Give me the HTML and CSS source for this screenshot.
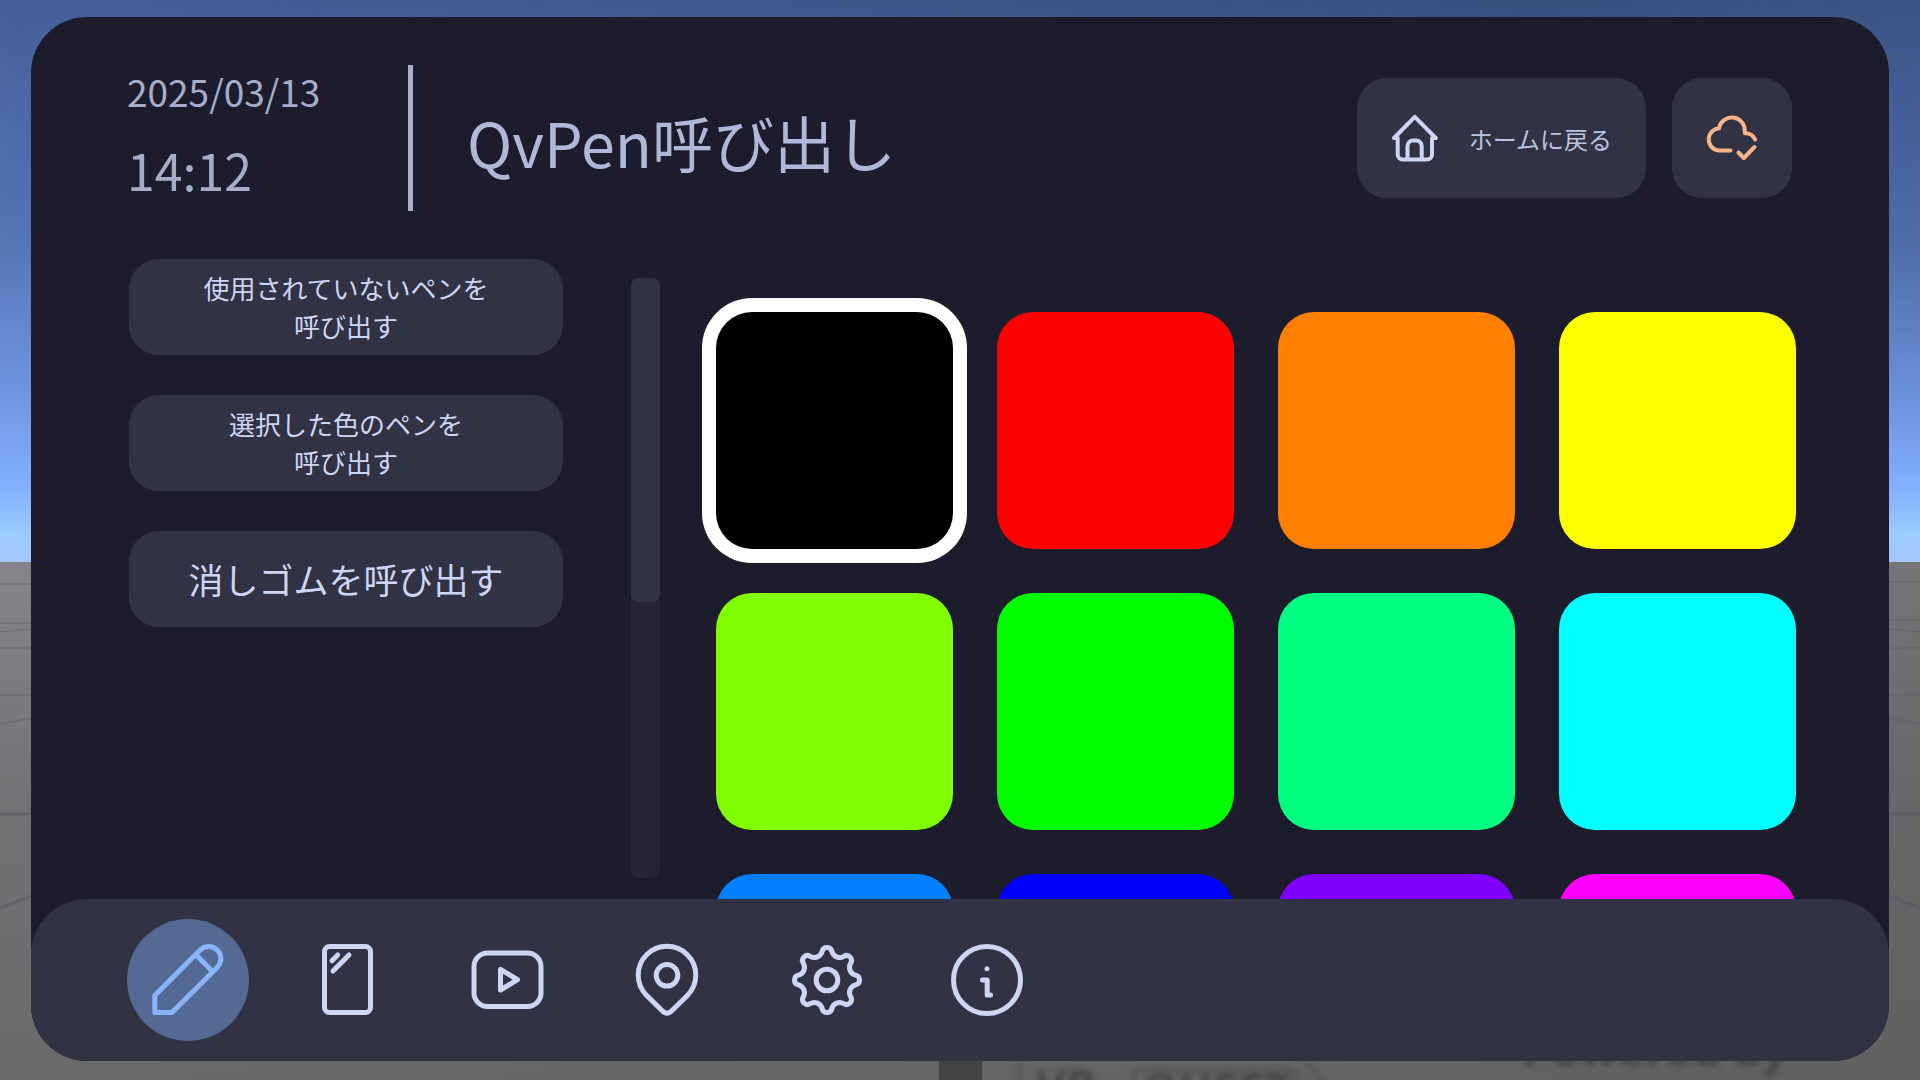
FILE: index.html
```html
<!DOCTYPE html>
<html lang="ja">
<head>
<meta charset="utf-8">
<meta name="viewport" content="width=device-width, initial-scale=1">
<title>QvPen呼び出し</title>
<link rel="stylesheet" href="styles.css">
</head>
<body>
<div class="scene">
  <svg class="backdrop" viewBox="0 0 1920 1080" preserveAspectRatio="none" aria-hidden="true">
    <defs>
      <linearGradient id="sky" x1="0" y1="0" x2="0" y2="1">
        <stop offset="0" stop-color="#45609b"/>
        <stop offset=".43" stop-color="#5675b7"/>
        <stop offset=".7" stop-color="#6f95e0"/>
        <stop offset=".86" stop-color="#82aeff"/>
        <stop offset=".95" stop-color="#9acbff"/>
        <stop offset="1" stop-color="#a6c6fb"/>
      </linearGradient>
      <linearGradient id="ground" x1="0" y1="0" x2="0" y2="1">
        <stop offset="0" stop-color="#858589"/>
        <stop offset=".5" stop-color="#727275"/>
        <stop offset="1" stop-color="#6a6a6b"/>
      </linearGradient>
      <linearGradient id="shade" x1="0" y1="0" x2="1" y2="0">
        <stop offset="0" stop-color="#1f2a3c" stop-opacity="0"/>
        <stop offset=".8" stop-color="#1f2a3c" stop-opacity=".3"/>
        <stop offset="1" stop-color="#1f2a3c" stop-opacity=".22"/>
      </linearGradient>
      <linearGradient id="dim" x1="0" y1="0" x2="1" y2="0">
        <stop offset="0" stop-color="#444" stop-opacity="0"/>
        <stop offset="1" stop-color="#444" stop-opacity=".25"/>
      </linearGradient>
      <linearGradient id="fade" x1="0" y1="0" x2="0" y2="1">
        <stop offset="0" stop-color="#fff"/>
        <stop offset="1" stop-color="#000"/>
      </linearGradient>
      <mask id="top"><rect width="1920" height="480" fill="url(#fade)"/></mask>
      <filter id="soft"><feGaussianBlur stdDeviation="3"/></filter>
    </defs>
    <rect width="1920" height="563" fill="url(#sky)"/>
    <rect width="1920" height="480" fill="url(#shade)" mask="url(#top)"/>
    <rect y="562" width="1920" height="518" fill="url(#ground)"/>
    <rect y="562" width="1920" height="518" fill="url(#dim)"/>
    <g stroke="#55565a" stroke-opacity=".45" fill="none">
      <path d="M0 584H31M0 623H31M0 632L31 629M0 648H31M0 695H31M0 724L31 718"/>
      <path d="M1889 582H1920M1889 620H1920M1889 629L1920 632M1889 648H1920M1889 695H1920M1889 718L1920 724"/>
      <path stroke-width="3" d="M0 814H31M0 908L31 896M1889 814H1920M1889 896L1920 908"/>
    </g>
    <rect x="939" y="1040" width="43" height="40" fill="#444446"/>
    <g filter="url(#soft)" class="sign">
      <path d="M1020 1060V1084M1308 1060L1322 1084M1134 1088V1071H1296V1088" fill="none" stroke="#505052" stroke-width="3"/>
      <text x="1036" y="1103">VR</text>
      <text x="1142" y="1107">QUEST</text>
      <text x="1522" y="1066">Powered by</text>
    </g>
  </svg>

  <main class="panel">
    <header class="header">
      <div class="clock">
        <time class="date">2025/03/13</time>
        <time class="time">14:12</time>
      </div>
      <h1 class="title">QvPen呼び出し</h1>
      <button class="tile home" type="button">
        <svg width="48" height="48" viewBox="0 0 48 48" aria-hidden="true">
          <path d="M6.700 24H3L23.800 2.800 44.800 24H41V40.500a5 5 0 0 1-5 5H11.700a5 5 0 0 1-5-5Z"/>
          <path d="M16.500 45V32a5.500 5.500 0 0 1 5.500-5.500h3.200a5.500 5.500 0 0 1 5.500 5.500V45"/>
        </svg>
        <span>ホームに戻る</span>
      </button>
      <button class="tile cloud" type="button" aria-label="同期済み">
        <svg width="54" height="44" viewBox="0 0 54 44" aria-hidden="true">
          <path d="M50.200 23.500A10.500 10.500 0 0 0 39.800 17.200V15A13 13 0 0 0 14 12.300A11.200 11.200 0 0 0 13 34.500H25.500"/>
          <path d="M33.500 36.500L38.800 42 49.500 31"/>
        </svg>
      </button>
    </header>

    <div class="body">
      <div class="actions">
        <button class="tile action" type="button">使用されていないペンを<br>呼び出す</button>
        <button class="tile action" type="button">選択した色のペンを<br>呼び出す</button>
        <button class="tile action large" type="button">消しゴムを呼び出す</button>
      </div>
      <div class="track"><div class="thumb"></div></div>
      <div class="palette" role="radiogroup" aria-label="ペンの色">
        <input class="swatch black" type="radio" name="color" aria-label="黒" checked>
        <input class="swatch red" type="radio" name="color" aria-label="赤">
        <input class="swatch orange" type="radio" name="color" aria-label="オレンジ">
        <input class="swatch yellow" type="radio" name="color" aria-label="黄">
        <input class="swatch lime" type="radio" name="color" aria-label="黄緑">
        <input class="swatch green" type="radio" name="color" aria-label="緑">
        <input class="swatch mint" type="radio" name="color" aria-label="青緑">
        <input class="swatch cyan" type="radio" name="color" aria-label="水色">
        <input class="swatch azure" type="radio" name="color" aria-label="空色">
        <input class="swatch blue" type="radio" name="color" aria-label="青">
        <input class="swatch violet" type="radio" name="color" aria-label="紫">
        <input class="swatch magenta" type="radio" name="color" aria-label="マゼンタ">
      </div>
    </div>

    <nav class="nav">
      <button class="tab active" type="button" aria-label="ペン">
        <svg width="72" height="72" viewBox="0 0 72 72"><path d="M2.800 68.500V51.500L48.100 6A12.150 12.150 0 0 1 65.300 23.200L20 68.500ZM43.700 10.600L60.800 27.700"/></svg>
      </button>
      <button class="tab" type="button" aria-label="ミラー">
        <svg width="72" height="72" viewBox="0 0 72 72"><rect x="12.500" y="2.500" width="46" height="66" rx="5"/><path d="M20 16.700L25.700 11M21 27L37 11"/></svg>
      </button>
      <button class="tab" type="button" aria-label="動画">
        <svg width="72" height="72" viewBox="0 0 72 72"><rect x="2" y="9" width="67" height="53.500" rx="13.500"/><path d="M28.500 25.500V46L45.500 35.700Z"/></svg>
      </button>
      <button class="tab" type="button" aria-label="ワープ">
        <svg width="72" height="72" viewBox="1 0 72 72"><path d="M15.600 51.400A28.800 28.800 0 1 1 56.400 51.400L40 67.500Q36 71 32 67.500Z"/><circle cx="36" cy="31.300" r="10.800"/></svg>
      </button>
      <button class="tab" type="button" aria-label="設定">
        <svg width="72" height="72" viewBox="-35 -36 72 72"><path d="M-4.870-28.650A5 5 0 0 1 4.870-28.650A8 8 0 0 0 16.810-23.700A5 5 0 0 1 23.700-16.810A8 8 0 0 0 28.650-4.870A5 5 0 0 1 28.650 4.870A8 8 0 0 0 23.700 16.810A5 5 0 0 1 16.810 23.700A8 8 0 0 0 4.870 28.650A5 5 0 0 1-4.870 28.650A8 8 0 0 0-16.810 23.700A5 5 0 0 1-23.700 16.810A8 8 0 0 0-28.650 4.870A5 5 0 0 1-28.650-4.870A8 8 0 0 0-23.700-16.810A5 5 0 0 1-16.810-23.700A8 8 0 0 0-4.870-28.650Z"/><circle r="10.800"/></svg>
      </button>
      <button class="tab" type="button" aria-label="情報">
        <svg width="72" height="72" viewBox="1 0 72 72"><circle cx="36" cy="36" r="33.500"/><path d="M31.500 36H36.200V51H39.500M36 24.700V24.800"/></svg>
      </button>
    </nav>
  </main>
</div>
</body>
</html>
```
FILE: styles.css
```css
* {
  box-sizing: border-box;
}

body {
  margin: 0;
  font-family: "Noto Sans CJK JP", sans-serif;
  font-weight: 400;
  color: #cdd6f4;
}

button {
  margin: 0;
  padding: 0;
  border: 0;
  font: inherit;
  color: inherit;
  cursor: pointer;
}

svg {
  display: block;
  overflow: visible;
  fill: none;
  stroke: currentColor;
  stroke-linecap: round;
  stroke-linejoin: round;
}

.scene {
  position: relative;
  height: 100vh;
  padding: 17px 31px 19px;
  overflow: hidden;
}

.backdrop {
  position: absolute;
  inset: 0;
  width: 100%;
  height: 100%;
  stroke: none;
}

.sign {
  fill: #454547;
  font: bold 46px "Noto Sans", sans-serif;
}

.panel {
  position: relative;
  display: flex;
  flex-direction: column;
  height: 100%;
  overflow: hidden;
  border-radius: 56px;
  background: #1d1c2d;
}

.header {
  display: flex;
  align-items: center;
  padding: 48px 97px 0 96px;
}

.clock {
  width: 286px;
  height: 146px;
  flex: none;
  border-right: 5px solid #a9b1d0;
  color: #a6adc8;
}

.clock time {
  display: block;
}

.date {
  font-size: 37px;
  line-height: 52px;
}

.time {
  font-size: 50px;
  line-height: 104px;
}

.title {
  flex: 1;
  margin: 0;
  padding: 8px 0 0 54px;
  font-size: 61px;
  font-weight: 400;
  line-height: 80px;
  color: #b0b8d9;
}

.tile {
  border-radius: 30px;
  background: #313244;
}

.home {
  display: flex;
  align-items: center;
  gap: 30px;
  height: 120px;
  padding: 0 34px;
  font-size: 24px;
  color: #cdd6f4;
  stroke-width: 4px;
}

.home span {
  color: #bac2de;
}

.cloud {
  display: grid;
  place-items: center;
  width: 120px;
  height: 120px;
  margin-left: 26px;
  color: #fab387;
  stroke-width: 4px;
}

.body {
  flex: 1;
  min-height: 0;
  display: grid;
  grid-template-columns: minmax(0, 434px) 29px minmax(0, 1fr);
  grid-template-rows: minmax(0, 1fr);
  padding: 0 79px 0 98px;
}

.actions {
  display: flex;
  flex-direction: column;
  gap: 40px;
  padding-top: 48px;
}

.action {
  height: 96px;
  font-size: 26px;
  line-height: 38px;
}

.large {
  font-size: 35px;
}

.track {
  margin: 67px -68px 21px 68px;
  border-radius: 8px;
  background: #252535;
}

.thumb {
  height: 54%;
  border-radius: 8px;
  background: #313244;
}

.palette {
  display: grid;
  grid-template-columns: repeat(4, 1fr);
  align-content: start;
  gap: 44px;
  margin-left: 110px;
  padding: 101px 14px 0;
  overflow: hidden;
}

.swatch {
  appearance: none;
  aspect-ratio: 1;
  margin: 0;
  border-radius: 36px;
  cursor: pointer;
}

.swatch:checked {
  box-shadow: 0 0 0 14px #fff;
}

.black { background: #000; }
.red { background: #f00; }
.orange { background: #ff8000; }
.yellow { background: #ff0; }
.lime { background: #80ff00; }
.green { background: #0f0; }
.mint { background: #00ff80; }
.cyan { background: #0ff; }
.azure { background: #0080ff; }
.blue { background: #00f; }
.violet { background: #8000ff; }
.magenta { background: #f0f; }

.nav {
  display: flex;
  align-items: center;
  gap: 38px;
  padding: 20px 96px;
  border-radius: 56px;
  background: #313244;
}

.tab {
  display: grid;
  place-items: center;
  width: 122px;
  height: 122px;
  border-radius: 50%;
  background: none;
  stroke-width: 5px;
}

.active {
  background: #546a94;
  color: #89b4fa;
}
```
